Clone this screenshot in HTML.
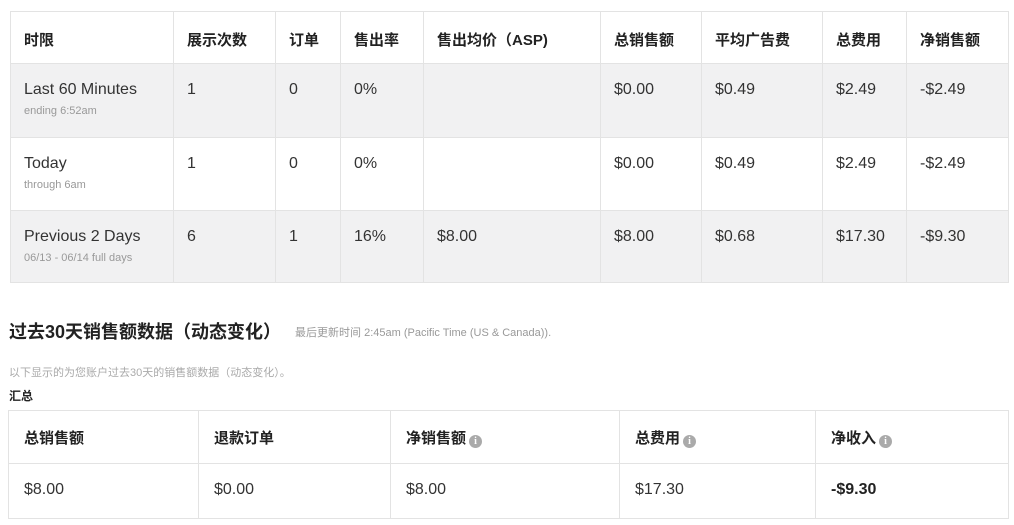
<!DOCTYPE html>
<html><head><meta charset="utf-8"><style>
*{margin:0;padding:0;box-sizing:border-box}
body{width:1014px;height:525px;background:#fff;font-family:"Liberation Sans","Noto Sans CJK SC",sans-serif;color:#333;position:relative;overflow:hidden}
table{border-collapse:collapse;position:absolute;table-layout:fixed}
td,th{border:1px solid #e3e3e3;text-align:left;vertical-align:top}
#t1{left:10px;top:11px;width:998px}
#t1 th{height:52px;font-size:15px;font-weight:bold;padding:17px 0 0 13px;color:#222}
#t1 td{font-size:16px;padding:17px 0 0 13px;color:#333}
#t1 tr.g td{background:#f1f1f2}
#t1 tr.r1 td{height:74px}#t1 tr.r2 td{height:73px}#t1 tr.r3 td{height:72px}
.s{display:block;font-size:11px;color:#999;margin-top:6px}
#t2{left:8px;top:410px;width:1000px}
#t2 th{height:53px;font-size:15px;font-weight:bold;padding:16px 0 0 15px;color:#222}
#t2 td{height:55px;font-size:16px;padding:17px 0 0 15px}
.i{display:inline-block;width:13px;height:13px;border-radius:50%;background:#aaa;color:#fff;font-size:10px;text-align:center;line-height:13px;font-family:"Liberation Serif",serif;font-weight:bold;vertical-align:-1px;margin-left:3px}
h2{position:absolute;left:9px;top:318px;font-size:18px;font-weight:bold;color:#222}
h2 small{font-size:11px;font-weight:normal;color:#999;margin-left:14px;vertical-align:2px}
.p{position:absolute;left:9px;top:364px;font-size:11px;color:#aaa}
.h{position:absolute;left:9px;top:387px;font-size:12px;font-weight:bold;color:#222}
</style></head><body>
<table id="t1">
<colgroup><col style="width:163px"><col style="width:102px"><col style="width:65px"><col style="width:83px"><col style="width:177px"><col style="width:101px"><col style="width:121px"><col style="width:84px"><col style="width:102px"></colgroup>
<tr><th>时限</th><th>展示次数</th><th>订单</th><th>售出率</th><th>售出均价（ASP)</th><th>总销售额</th><th>平均广告费</th><th>总费用</th><th>净销售额</th></tr>
<tr class="g r1"><td>Last 60 Minutes<span class="s">ending 6:52am</span></td><td>1</td><td>0</td><td>0%</td><td></td><td>$0.00</td><td>$0.49</td><td>$2.49</td><td>-$2.49</td></tr>
<tr class="r2"><td>Today<span class="s">through 6am</span></td><td>1</td><td>0</td><td>0%</td><td></td><td>$0.00</td><td>$0.49</td><td>$2.49</td><td>-$2.49</td></tr>
<tr class="g r3"><td>Previous 2 Days<span class="s">06/13 - 06/14 full days</span></td><td>6</td><td>1</td><td>16%</td><td>$8.00</td><td>$8.00</td><td>$0.68</td><td>$17.30</td><td>-$9.30</td></tr>
</table>
<h2>过去30天销售额数据（动态变化）<small>最后更新时间 2:45am (Pacific Time (US &amp; Canada)).</small></h2>
<div class="p">以下显示的为您账户过去30天的销售额数据（动态变化）。</div>
<div class="h">汇总</div>
<table id="t2">
<colgroup><col style="width:190px"><col style="width:192px"><col style="width:229px"><col style="width:196px"><col style="width:193px"></colgroup>
<tr><th>总销售额</th><th>退款订单</th><th>净销售额<span class="i">i</span></th><th>总费用<span class="i">i</span></th><th>净收入<span class="i">i</span></th></tr>
<tr><td>$8.00</td><td>$0.00</td><td>$8.00</td><td>$17.30</td><td style="font-weight:bold;color:#222">-$9.30</td></tr>
</table>
</body></html>
